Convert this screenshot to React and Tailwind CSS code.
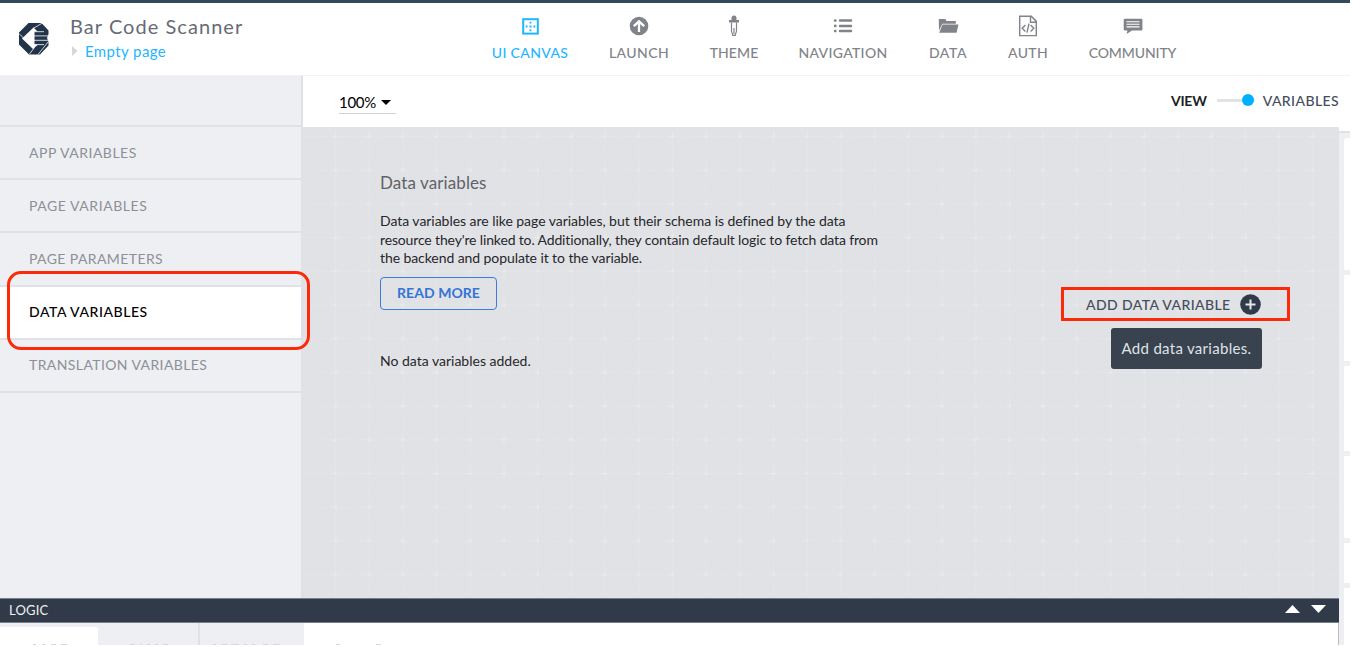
const Caret = ({ d, w = 16, h = 9, className = "" }) => (
  <svg width={w} height={h} viewBox={`0 0 ${w} ${h}`} className={className} fill="currentColor">
    <path d={d} />
  </svg>
);

const icons = {
  canvas: (
    <svg width="17" height="17" viewBox="0 0 17 17" fill="none" stroke="currentColor">
      <rect x="1.2" y="1.2" width="14.6" height="14.4" strokeWidth="2" />
      <path d="M8.5 3.7v1.8M8.5 7.5v2M8.5 11.5v1.8M3.7 8.5h1.8M7.5 8.5h2M11.5 8.5h1.8" strokeWidth="1.9" />
    </svg>
  ),
  launch: (
    <svg width="20" height="20" viewBox="0 0 20 20">
      <circle cx="10" cy="10" r="9.3" fill="currentColor" />
      <path d="M10 16V6.2M4.8 10.2L10 5.4l5.2 4.8" fill="none" stroke="#fff" strokeWidth="2.3" />
    </svg>
  ),
  theme: (
    <svg width="12" height="22" viewBox="0 0 12 22">
      <path d="M3.5 5V3a2.5 2.500 0 0 1 5 0v2H11v2.600H1V5z" fill="currentColor" />
      <path d="M3.500 7.500v8.200c0 1.500.9 2.200 1.200 4.600h2.600c.3-2.400 1.200-3.100 1.200-4.600V7.500M6 13v6" fill="none" stroke="currentColor" strokeWidth="1.200" />
    </svg>
  ),
  nav: (
    <svg width="20" height="16" viewBox="0 0 20 16" fill="none" stroke="currentColor" strokeWidth="2.500" strokeLinecap="round">
      <path d="M7 2.600h11M7 7.900h11M7 13.100h11" />
      <path d="M2.200 2.600h.1M2.200 7.900h.1M2.200 13.100h.1" strokeWidth="2.800" />
    </svg>
  ),
  data: (
    <svg width="21" height="16" viewBox="0 0 21 16" fill="currentColor">
      <path d="M.8 1h6.500l1.200 1.900h9.300v2.800H4.400L1 12.500z" />
      <path d="M4.500 6.500h16l-2 8.200H1.200z" />
    </svg>
  ),
  auth: (
    <svg width="20" height="22" viewBox="0 0 20 22" fill="none" stroke="currentColor" strokeWidth="1.400">
      <path d="M1.700 1.200h11.600l5 5.200v14.200H1.700zM12.500 1.500v5.700h5.600" />
      <path d="M7.400 10L4.200 13.300l3.200 3.200M12.600 10l3.200 3.300-3.200 3.200M11 8.700L9 17.600" />
    </svg>
  ),
  community: (
    <svg width="20" height="17" viewBox="0 0 20 17">
      <path d="M1.800.8h16.500q1.100 0 1.100 1v9.600q0 1-1.100 1H9L3.500 16l1-3.600H1.800q-1.100 0-1.100-1V1.800q0-1 1.100-1z" fill="currentColor" />
      <path d="M3.500 3.700h13M3.500 6.300h13M3.500 8.900h13" stroke="#fff" strokeWidth="1.100" />
    </svg>
  ),
};

const nav = [
  { label: "UI CANVAS", icon: "canvas", cls: "w-[78px] text-[#1fb6ff]", t: "tracking-[0.35px]" },
  { label: "LAUNCH", icon: "launch", cls: "ml-[40px] w-[60px] text-[#808389]", t: "tracking-[0.4px]" },
  { label: "THEME", icon: "theme", cls: "ml-[40px] w-[50px] text-[#808389]", t: "tracking-[0.1px]" },
  { label: "NAVIGATION", icon: "nav", cls: "ml-[39px] w-[90px] text-[#808389]", t: "tracking-[0.3px]" },
  { label: "DATA", icon: "data", cls: "ml-[40px] w-[40px] text-[#808389]", t: "tracking-[0.6px]" },
  { label: "AUTH", icon: "auth", cls: "ml-[40px] w-[40px] text-[#808389]", t: "tracking-[0.3px]" },
  { label: "COMMUNITY", icon: "community", cls: "ml-[40px] w-[89px] text-[#808389]", t: "tracking-[-0.1px]" },
];

const sections = [
  { label: "APP VARIABLES", t: "tracking-[0.5px]" },
  { label: "PAGE VARIABLES", t: "tracking-[0.55px]" },
  { label: "PAGE PARAMETERS", t: "tracking-[0.4px]" },
  { label: "DATA VARIABLES", t: "tracking-[0.55px]", active: true },
  { label: "TRANSLATION VARIABLES", t: "tracking-[0.4px]" },
];

function Logo() {
  return (
    <svg width="30" height="32" viewBox="0 0 30 32" className="mt-[20px] ml-[19px] shrink-0">
      <path d="M9.500 0h13l7 7.500v3.500l-1.500 4 1.500 3.500v4L21 31.500H10L0 21.500V9.500z" fill="#22344a" />
      <path d="M3 15.500L14.500 4.500l4 4h-3v13h3.500L14 26z" fill="#fff" />
      <path d="M15 8.700h10M15 12.900h15M15 17.300h15M15 21.600h10M23.500 0l-9.500 5.500M0 10.500l5 5M10.500 31l5-6.500M29.500 18.500L19 31.500" fill="none" stroke="#fff" strokeWidth="0.800" />
    </svg>
  );
}

function Header() {
  return (
    <header className="flex h-[75px] w-[1350px] shrink-0 border-t-[3px] border-[#34495e] bg-white">
      <Logo />
      <div className="ml-[21px] w-[421px] shrink-0 whitespace-nowrap">
        <h1 className="mt-[10px] text-[20px] leading-[26px] tracking-[1.050px] text-[#666b76]">Bar Code Scanner</h1>
        <div className="mt-[1px] ml-[-1px] flex items-center text-[15px] leading-[22px] tracking-[0.400px] text-[#1fb6ff]">
          <Caret w={6} h={10} d="M0 0L5.500 5L0 10z" className="mr-[7px] ml-[3px] text-[#d3d6db]" />
          Empty page
        </div>
      </div>
      <nav className="flex">
        {nav.map((n) => (
          <div key={n.label} className={`flex flex-col items-center whitespace-nowrap ${n.cls}`}>
            <div className="mt-[11px] flex h-[24px] items-center">{icons[n.icon]}</div>
            <div className={`mt-[6px] text-[14px] leading-[18px] font-medium ${n.t}`}>{n.label}</div>
          </div>
        ))}
      </nav>
    </header>
  );
}

function Grid() {
  return (
    <svg className="absolute inset-0" width="1036" height="471">
      <defs>
        <pattern id="grid" x="32" y="9" width="33.700" height="33.700" patternUnits="userSpaceOnUse">
          <path d="M0 .5h33.700M.5 0v33.700" stroke="#e5e6e9" strokeDasharray="3 1.800" />
          <path d="M0 .5h2M31.700 .5h2M.5 0v2M.5 31.700v2" stroke="#e9eaed" strokeWidth="1.500" />
        </pattern>
      </defs>
      <rect width="1036" height="471" fill="url(#grid)" />
    </svg>
  );
}

function Sidebar() {
  return (
    <aside className="relative w-[303px] shrink-0 border-r-2 border-[#dfe1e5] bg-[#eeeff3]">
      <div className="h-[51px] border-b-2 border-[#e0e2e6]" />
      {sections.map((s) => (
        <div
          key={s.label}
          className={`flex h-[53.200px] items-center border-b-2 border-[#e0e2e6] pl-[29px] text-[14px] whitespace-nowrap ${s.t} ${s.active ? "bg-white font-medium text-black" : "text-[#8d9096]"}`}
        >
          <span className="pb-[1px]">{s.label}</span>
        </div>
      ))}
      <div className="absolute top-[195px] left-[7px] z-10 h-[79px] w-[303px] rounded-[14px] border-[3px] border-[#fc2a0b]" />
    </aside>
  );
}

function Workspace() {
  return (
    <main className="flex w-[1036px] shrink-0 flex-col">
      <div className="flex h-[51px] shrink-0 bg-white">
        <div className="mt-[16px] ml-[36px] flex h-[22px] w-[57px] items-center border-b border-[#cfd1d6] text-[15px] tracking-[-0.300px] text-black">
          100%
          <Caret w={10} h={5} d="M0 0h10L5 5z" className="ml-[5px]" />
        </div>
        <div className="ml-auto flex h-[48px] items-center text-[14px] whitespace-nowrap">
          <span className="font-bold tracking-[-0.200px] text-[#202226]">VIEW</span>
          <span className="ml-[10px] h-[3px] w-[25px] bg-[#e1e3e7]" />
          <span className="h-[12px] w-[12px] rounded-full bg-[#00b0ff]" />
          <span className="ml-[9px] font-medium tracking-[0.400px] text-[#454d5a]">VARIABLES</span>
        </div>
      </div>
      <section className="relative flex-1 bg-[#e1e2e6]">
        <Grid />
        <div className="relative flex">
          <div className="w-[520px] pt-[44px] pl-[77px] whitespace-nowrap">
            <h2 className="text-[17px] leading-[24px] tracking-[0.100px] text-[#606268]">Data variables</h2>
            <p className="mt-[17px] text-[14px] leading-[18.500px] text-[#26272a]">
              <span className="tracking-[-0.040px]">Data variables are like page variables, but their schema is defined by the data</span>
              <br />
              <span className="tracking-[-0.145px]">resource they're linked to. Additionally, they contain default logic to fetch data from</span>
              <br />
              <span className="tracking-[-0.080px]">the backend and populate it to the variable.</span>
            </p>
            <button className="mt-[9px] flex h-[33px] w-[117px] items-center justify-center rounded-[4px] border-[1.500px] border-[#3b7ddd] pb-[1px] text-[14px] font-bold tracking-[0.050px] text-[#3374d6]">
              READ MORE
            </button>
            <p className="mt-[41px] text-[14px] leading-[20px] text-[#26272a]">No data variables added.</p>
          </div>
          <div className="mr-[49px] ml-auto flex w-[229px] flex-col pt-[160px] whitespace-nowrap">
            <button className="flex h-[34px] items-center border-[3px] border-[#fc2a0b] pl-[22px] text-[14px] font-medium tracking-[0.400px] text-[#454d5a]">
              <span className="w-[154px] text-left">ADD DATA VARIABLE</span>
              <svg width="21" height="21" viewBox="0 0 21 21">
                <circle cx="10.500" cy="10.500" r="10.300" fill="#303a49" />
                <path d="M10.500 5.500v10M5.500 10.500h10" stroke="#e6e8eb" strokeWidth="2" />
              </svg>
            </button>
            <div className="mt-[7px] ml-[50px] flex h-[41px] w-[151px] items-center justify-center rounded-[3px] bg-[#39424f] text-[15px] tracking-[0.300px] text-[#dfe2e6]">
              Add data variables.
            </div>
          </div>
        </div>
      </section>
    </main>
  );
}

export default function App() {
  return (
    <div className="flex h-[647px] w-[1353px] flex-col overflow-hidden bg-white font-['Lato',sans-serif]">
      <Header />
      <div className="flex h-[570px] w-[1350px] shrink-0 border-t border-[#f3f3f4]">
        <div className="flex w-[1339px] shrink-0 flex-col">
          <div className="flex h-[522px] shrink-0">
            <Sidebar />
            <Workspace />
          </div>
          <div className="flex h-[25px] shrink-0 items-center border-y border-[#777f8b] bg-[#303a49] pr-[13px] pl-[9px] text-[13px] tracking-[0.200px] text-[#f0f1f3]">
            <span className="pt-[1px]">LOGIC</span>
            <Caret w={15} h={8} d="M0 8h15L7.500 0z" className="mr-[11px] mb-[3px] ml-auto text-white" />
            <Caret w={15} h={8} d="M0 0h15L7.500 8z" className="mb-[3px] text-white" />
          </div>
          <div className="relative flex flex-1 bg-[#eeeff3]">
            <div className="mt-[4px] w-[98px] rounded-tr-[2px] bg-white" />
            <div className="w-[102px] border-r-2 border-[#dfe1e5]" />
            <div className="w-[104px]" />
            <div className="flex-1 border-r border-[#b9bbc0] bg-white" />
            <svg className="absolute bottom-0 left-0" width="400" height="2">
              <path d="M33 1.500h3M42 1.500h3M51 1.500h5M61 1.500h6M130 1.500h5M140 1.500h2M147 1.500h3M155 1.500h3M163 1.500h5M213 1.500h3M222 1.500h5M231 1.500h8M244 1.500h3M252 1.500h3M263 1.500h5M273 1.500h7M336 1.500h4M376 1.500h5" stroke="#d5d7dc" />
            </svg>
          </div>
        </div>
        <div className="flex flex-1 flex-col">
          <div className="h-[57px] border-b-2 border-[#dfe1e5]" />
          <div className="flex flex-1 flex-col gap-[5px] bg-[#eeeff3] pt-[5px] pl-[5px]">
            <div className="h-[132px] shrink-0 rounded-tl-[3px] bg-white" />
            <div className="h-[86px] shrink-0 bg-white" />
            <div className="h-[85px] shrink-0 bg-white" />
            <div className="h-[82px] shrink-0 bg-white" />
            <div className="h-[40px] shrink-0 bg-white" />
            <div className="flex-1 bg-white" />
          </div>
        </div>
      </div>
    </div>
  );
}
